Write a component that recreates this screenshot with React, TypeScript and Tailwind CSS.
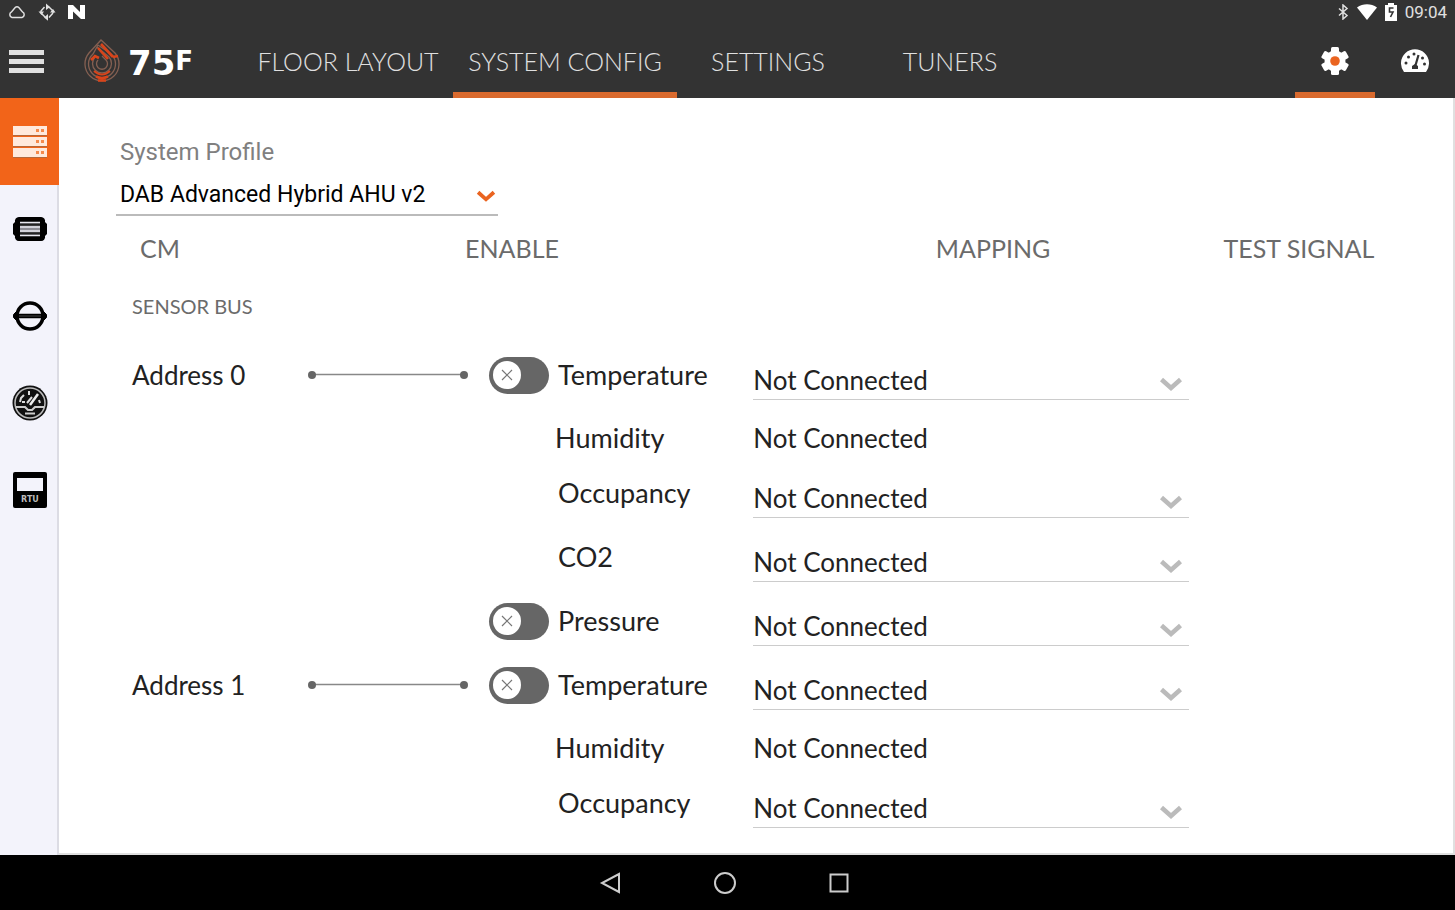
import { useState } from "react";
import type { ReactNode } from "react";

interface SensorRow {
  id: string;
  address?: string;
  sensor: string;
  toggle?: boolean;
  fixed?: boolean;
}

const rows: SensorRow[] = [
  { id: "a0-temperature", address: "Address 0", sensor: "Temperature", toggle: true },
  { id: "a0-humidity", sensor: "Humidity", fixed: true },
  { id: "a0-occupancy", sensor: "Occupancy" },
  { id: "a0-co2", sensor: "CO2" },
  { id: "a0-pressure", sensor: "Pressure", toggle: true },
  { id: "a1-temperature", address: "Address 1", sensor: "Temperature", toggle: true },
  { id: "a1-humidity", sensor: "Humidity", fixed: true },
  { id: "a1-occupancy", sensor: "Occupancy" },
];

const tabs = [
  { label: "FLOOR LAYOUT", width: "w-[210px]" },
  { label: "SYSTEM CONFIG", width: "w-56" },
  { label: "SETTINGS", width: "w-[182px]" },
  { label: "TUNERS", width: "w-[182px]" },
];

function StatusBar() {
  return (
    <div className="flex h-6 items-center justify-between pl-2 pr-2 text-[#e0e0e0]">
      <div className="flex items-center gap-3">
        <svg width="18" height="16" viewBox="0 0 18 16" fill="none" stroke="currentColor" strokeWidth="1.5">
          <path d="M4 13.5a3 3 0 0 1-.5-5.6L7.2 3.6a2.5 2.5 0 0 1 3.6 0L14.5 7.9a3 3 0 0 1-.5 5.6Z" />
        </svg>
        <svg width="18" height="18" viewBox="0 0 18 18" fill="none" stroke="currentColor" strokeWidth="1.5">
          <path d="M3 10V8l3.500-4M11 4l4 4v2M15 10l-4 4.500M7 14l-4-4" />
          <path d="M8 .5 12 4 8 7ZM10 11 6 14.500l4 3.200ZM.5 8.500 3.500 12 6 8.500ZM12 9.500l3-3.500 2.500 3.500Z" fill="currentColor" stroke="none" />
        </svg>
        <svg width="17" height="14" viewBox="0 0 17 14" fill="#fff">
          <path d="M0 0h5l7 7V0h5v14h-4L5 6.500V14H0Z" />
        </svg>
      </div>
      <div className="flex items-center gap-2">
        <svg width="12" height="16" viewBox="0 0 12 16" fill="none" stroke="currentColor" strokeWidth="1.5">
          <path d="m2 4.500 8 7L6 15V1l4 3.500-8 7" />
        </svg>
        <svg width="20" height="16" viewBox="0 0 20 16" fill="#fff">
          <path d="M0 3.500C6-.8 14-.8 20 3.500L10 16Z" />
        </svg>
        <svg width="12" height="18" viewBox="0 0 12 18">
          <path d="M0 2h3V0h6v2h3v16H0Z" fill="#fff" />
          <path d="M8.500 5H4.500v4H8l-2.500 5" fill="none" stroke="#333" strokeWidth="1.600" />
        </svg>
        <time className="font-[Roboto,sans-serif] text-[17px] leading-6">09:04</time>
      </div>
    </div>
  );
}

function Logo() {
  return (
    <a href="#home" aria-label="75F" className="flex items-center gap-2 text-white">
      <svg width="36" height="44" viewBox="0 0 36 44" fill="none">
        <g stroke="#856052" strokeWidth="1.300">
          <path d="M17 1 5 14A17 17 0 1 0 31 14Z" />
          <path d="m14 6-5 9a13.500 13.500 0 1 0 18 0L14 6" />
          <path d="M11 18a9.500 9.500 0 1 0 14 0L13 8" />
          <path d="M14 21a5.500 5.500 0 1 0 8 0l-4-4" />
        </g>
        <g stroke="#d9441a" strokeWidth="2.600">
          <path d="m17 5 12 13M14 9l10 11M7 21l4-4 4 2M29 18l5-1M12 37.500c4 2 8 2 12 0M14 41.500h8" />
          <path d="M10 32c5 4.500 11 4.500 16 0" strokeWidth="2" />
        </g>
      </svg>
      <span className="flex items-start pt-1 font-['DejaVu_Sans',sans-serif] font-bold">
        <span className="text-[34px] leading-8">75</span>
        <span className="text-[26px] leading-7">F</span>
      </span>
    </a>
  );
}

function GearIcon() {
  return (
    <svg width="28" height="28" viewBox="0 0 28 28">
      <g fill="#fff">
        <circle cx="14" cy="14" r="10.500" />
        <rect x="10" y="0" width="8" height="28" rx="1.500" />
        <rect x="10" y="0" width="8" height="28" rx="1.500" transform="rotate(60 14 14)" />
        <rect x="10" y="0" width="8" height="28" rx="1.500" transform="rotate(120 14 14)" />
      </g>
      <circle cx="14" cy="14" r="4.800" fill="#ea6420" />
    </svg>
  );
}

function GaugeIcon() {
  return (
    <svg width="28" height="24" viewBox="0 0 28 24">
      <path d="M3 23a14 14 0 1 1 22 0Z" fill="#fff" />
      <g fill="#333">
        <circle cx="5" cy="14" r="1.500" />
        <circle cx="7.500" cy="8" r="1.500" />
        <circle cx="13" cy="5" r="1.500" />
        <circle cx="21.500" cy="9" r="1.500" />
        <circle cx="23.500" cy="15" r="1.500" />
        <path d="M11 20v-3l3-2 3 2v3Z" />
      </g>
      <path d="m14 18 3.500-12" stroke="#333" strokeWidth="2.200" />
    </svg>
  );
}

function SideIcon({ name }: { name: string }) {
  switch (name) {
    case "System":
      return (
        <svg width="36" height="32" viewBox="0 0 36 32">
          <path d="M1 0h34v9H1zM1 11h34v9H1zM1 22h34v9H1z" fill="#ffe9dc" />
          <path d="M1 9.500h34M1 20.500h34M1 31.500h34" stroke="#b3683c" />
          <path d="M24 3h3v3h-3zM29 3h3v3h-3zM24 14h3v3h-3zM29 14h3v3h-3zM24 25h3v3h-3zM29 25h3v3h-3z" fill="#f58a4c" />
        </svg>
      );
    case "Terminal":
      return (
        <svg width="36" height="26" viewBox="0 0 36 26">
          <path d="M7 1h22a4 4 0 0 1 4 5l2 2v10l-2 2a4 4 0 0 1-4 5H7a4 4 0 0 1-4-5l-2-2V8l2-2a4 4 0 0 1 4-5Z" fill="#000" />
          <path d="M8 6h20v14H8z" fill="#8c8c94" />
          <path d="M8 6.500h20M8 11h20M8 15h20M8 19.500h20" stroke="#e8e8f0" strokeWidth="1.500" />
          <path d="M8 8.700h20M8 17.300h20" stroke="#222" strokeWidth="2.200" />
        </svg>
      );
    case "Damper":
      return (
        <svg width="36" height="32" viewBox="0 0 36 32" fill="none" stroke="#000">
          <circle cx="18" cy="16" r="13" strokeWidth="3.500" />
          <path d="M2 16h32" strokeWidth="4.500" />
          <path d="m5 11-3.500 3.500v3L5 21ZM31 11l3.500 3.500v3L31 21Z" fill="#000" strokeWidth="1" />
          <path d="M7 16h22" stroke="#444" strokeWidth="1" />
        </svg>
      );
    case "Meter":
      return (
        <svg width="36" height="36" viewBox="0 0 36 36" fill="none">
          <circle cx="18" cy="18" r="17.500" fill="#111" />
          <circle cx="18" cy="18" r="15" stroke="#bbb" strokeWidth="1.500" />
          <path d="M4 22h9l3 3h4l3-3h9M13 28.500h10" stroke="#ccc" strokeWidth="2.200" />
          <path d="m18 20 8-11" stroke="#eee" strokeWidth="2.500" />
          <path d="M8 17l1-4 3-3M10 17h3M17 6v4M27 15l1 3M20 12l-5 6" stroke="#ddd" strokeWidth="2" />
        </svg>
      );
    default:
      return (
        <svg width="36" height="36" viewBox="0 0 36 36">
          <rect x="1" y="0" width="34" height="36" rx="2" fill="#000" />
          <path d="M5 6h26v13H5z" fill="#f3f3fb" />
          <text x="18" y="30" textAnchor="middle" fill="#bbb" fontFamily="DejaVu Sans, sans-serif" fontSize="8" fontWeight="700">
            RTU
          </text>
        </svg>
      );
  }
}

function Chevron({ className }: { className: string }) {
  return (
    <svg className={className} width="24" height="16" viewBox="0 0 24 16" fill="none" stroke="currentColor" strokeWidth="4.500">
      <path d="m2.500 3.500 9.500 8.500 9.500-8.500" />
    </svg>
  );
}

function Toggle({ label }: { label: string }) {
  const [on, setOn] = useState(false);
  return (
    <span className="relative inline-flex h-[37px] w-15 shrink-0">
      <input
        type="checkbox"
        role="switch"
        aria-label={label}
        checked={on}
        onChange={() => setOn(!on)}
        className="peer h-full w-full cursor-pointer appearance-none rounded-full bg-[#666] checked:bg-[#f26419]"
      />
      <span className="pointer-events-none absolute left-1 top-1 flex size-7 items-center justify-center rounded-full bg-white peer-checked:left-7">
        <svg width="12" height="12" viewBox="0 0 12 12" stroke="#777" strokeWidth="1.200">
          <path d="m1 1 10 10M11 1 1 11" />
        </svg>
      </span>
    </span>
  );
}

function Connector() {
  return (
    <svg width="162" height="10" viewBox="0 0 162 10" fill="#666" stroke="#888">
      <path d="M5 4.500h152" strokeWidth="1.500" />
      <circle cx="5" cy="5" r="4" stroke="none" />
      <circle cx="157" cy="5" r="4" stroke="none" />
    </svg>
  );
}

function HeaderCell({ className, children }: { className: string; children: ReactNode }) {
  return (
    <th scope="col" className={`h-16 text-[25px] font-normal text-[#6b6b6b] ${className}`}>
      {children}
    </th>
  );
}

export default function App() {
  const [tab, setTab] = useState("SYSTEM CONFIG");
  const [side, setSide] = useState("System");

  return (
    <div className="flex min-h-screen flex-col bg-white font-[Lato,sans-serif] text-[26px] leading-8 text-[#222]">
      <header className="bg-[#333]">
        <StatusBar />
        <div className="flex h-[74px] items-stretch justify-between">
          <div className="flex items-stretch">
            <div className="flex w-[243px] items-center gap-10 pl-2">
              <button aria-label="Menu" className="flex w-9 flex-col gap-1 pl-px">
                <span className="h-[5px] bg-[#e0e0e0]" />
                <span className="h-[5px] bg-[#e0e0e0]" />
                <span className="h-[5px] bg-[#e0e0e0]" />
              </button>
              <Logo />
            </div>
            <nav className="flex">
              {tabs.map((t) => (
                <button
                  key={t.label}
                  onClick={() => setTab(t.label)}
                  className={`${t.width} border-y-6 border-t-transparent text-center text-[25px] font-light whitespace-nowrap text-[#e0e0e0] ${
                    tab === t.label ? "border-b-[#d96a2e]" : "border-b-transparent"
                  }`}
                >
                  {t.label}
                </button>
              ))}
            </nav>
          </div>
          <div className="flex">
            <button aria-label="Configuration" className="flex w-20 items-center justify-center border-y-6 border-t-transparent border-b-[#d96a2e]">
              <GearIcon />
            </button>
            <button aria-label="Dashboard" className="flex w-20 items-center justify-center">
              <GaugeIcon />
            </button>
          </div>
        </div>
      </header>

      <div className="flex flex-1">
        <aside className="w-[59px] shrink-0 border-r-2 border-[#dcdce4] bg-[#f3f3fb]">
          {["System", "Terminal", "Damper", "Meter", "RTU"].map((name) => (
            <button
              key={name}
              aria-label={name}
              onClick={() => setSide(name)}
              className={`flex h-[87px] w-[59px] items-center justify-center ${side === name ? "bg-[#f26419]" : ""}`}
            >
              <SideIcon name={name} />
            </button>
          ))}
        </aside>

        <main className="min-w-0 flex-1 border-r-2 border-b-2 border-[#e0e0e0] pt-[38px] pr-10 pb-[18px] pl-[57px]">
          <div className="w-[382px] font-[Roboto,sans-serif]">
            <label htmlFor="profile" className="block pl-1 text-[24px] leading-8 text-[#808080]">
              System Profile
            </label>
            <div className="relative mt-2">
              <select id="profile" className="block h-10 w-full appearance-none border-b-2 border-[#bbb] pl-1 text-[23px] text-black outline-none">
                <option>DAB Advanced Hybrid AHU v2</option>
              </select>
              <Chevron className="pointer-events-none absolute top-3 right-0.5 h-4 w-5 text-[#ea6420]" />
            </div>
          </div>

          <div className="pl-4">
            <table className="w-full table-fixed border-collapse">
              <thead>
                <tr>
                  <HeaderCell className="w-[26%] pl-2 text-left">CM</HeaderCell>
                  <HeaderCell className="w-[22.5%] text-left">ENABLE</HeaderCell>
                  <HeaderCell className="w-[34%] pl-11 text-center">MAPPING</HeaderCell>
                  <HeaderCell className="pr-1 text-center">TEST SIGNAL</HeaderCell>
                </tr>
                <tr>
                  <th colSpan={4} scope="colgroup" className="h-[63px] pb-3 text-left text-[20px] font-normal text-[#6b6b6b]">
                    SENSOR BUS
                  </th>
                </tr>
              </thead>
              <tbody>
                {rows.map((row) => (
                  <tr key={row.id} className={row.fixed ? "h-[54px]" : "h-16"}>
                    <td className="p-0">
                      {row.address && (
                        <div className="-mr-1 flex items-center justify-between">
                          {row.address}
                          <Connector />
                        </div>
                      )}
                    </td>
                    <td className={row.fixed ? "p-0 pt-2" : "p-0"}>
                      <div className={row.fixed ? "pl-[90px] text-[27px]" : "flex items-center gap-[9px] pl-6 text-[27px]"}>
                        {row.toggle && <Toggle label={row.sensor} />}
                        <label htmlFor={row.id} className={row.toggle || row.fixed ? "" : "pl-[69px]"}>
                          {row.sensor}
                        </label>
                      </div>
                    </td>
                    <td className={row.fixed ? "p-0 pt-2" : "p-0 pb-[7px] align-bottom"}>
                      {row.fixed ? (
                        <output id={row.id}>Not Connected</output>
                      ) : (
                        <div className="relative">
                          <select id={row.id} className="block h-10 w-full appearance-none border-b border-[#ccc] outline-none">
                            <option>Not Connected</option>
                          </select>
                          <Chevron className="pointer-events-none absolute top-4 right-1.5 text-[#bbb]" />
                        </div>
                      )}
                    </td>
                    <td />
                  </tr>
                ))}
              </tbody>
            </table>
          </div>
        </main>
      </div>

      <footer className="flex h-[55px] items-center justify-center gap-[90px] bg-black pr-1.5 text-[#ccc]">
        <button aria-label="Back">
          <svg width="24" height="24" viewBox="0 0 24 24" fill="none" stroke="currentColor" strokeWidth="2">
            <path d="M20 3v18L3 12Z" />
          </svg>
        </button>
        <button aria-label="Home">
          <svg width="24" height="24" viewBox="0 0 24 24" fill="none" stroke="currentColor" strokeWidth="2">
            <circle cx="12" cy="12" r="10" />
          </svg>
        </button>
        <button aria-label="Recent apps">
          <svg width="24" height="24" viewBox="0 0 24 24" fill="none" stroke="currentColor" strokeWidth="2">
            <path d="M3.500 3.500h17v17h-17z" />
          </svg>
        </button>
      </footer>
    </div>
  );
}
